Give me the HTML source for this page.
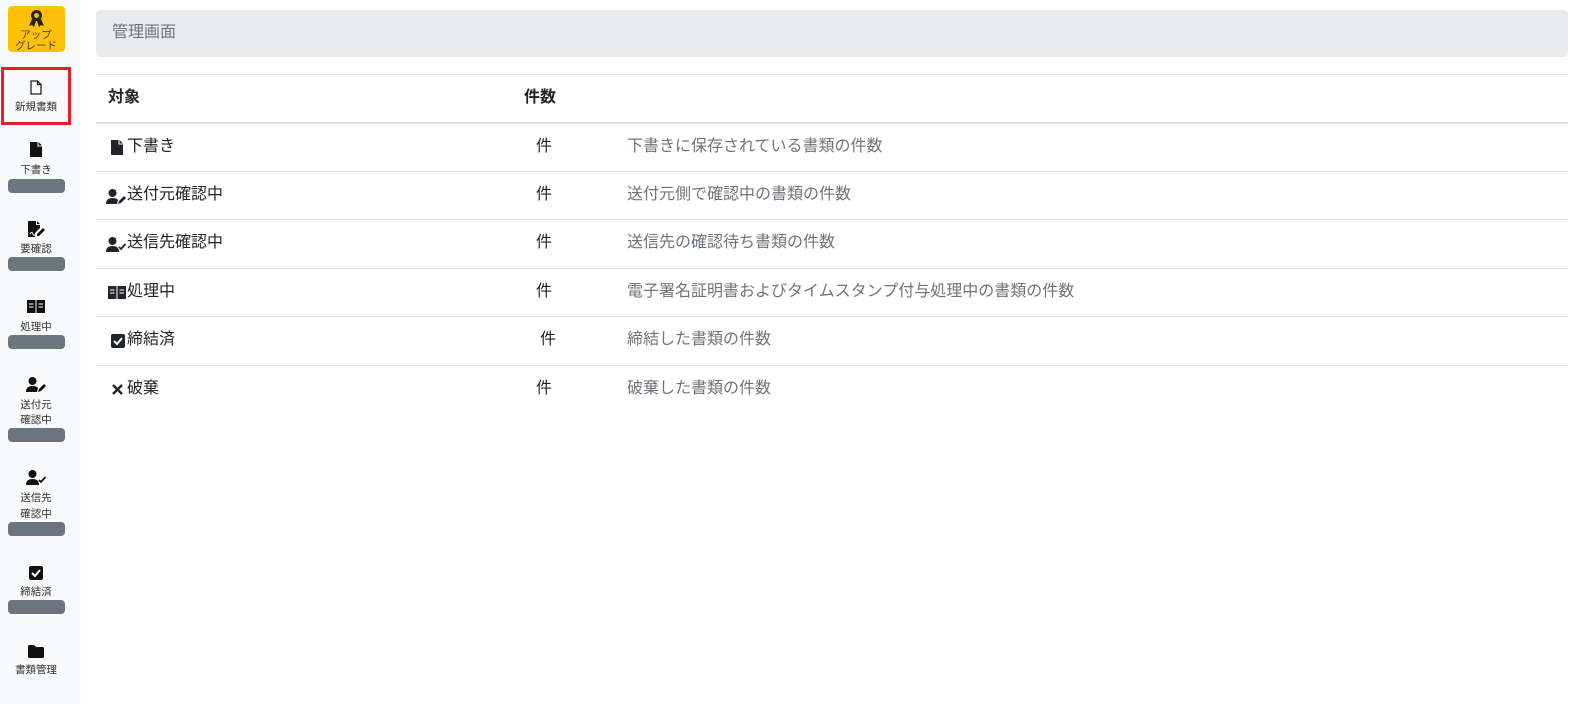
<!DOCTYPE html>
<html><head><meta charset="utf-8"><style>
*{margin:0;padding:0;box-sizing:border-box}
body{width:1587px;height:704px;background:#fff;font-family:"Liberation Sans","Noto Sans CJK JP",sans-serif;color:#212529;position:relative;overflow:hidden}
.side{position:absolute;left:0;top:0;width:81px;height:704px;background:#f8f9fa}
.a{position:absolute}
.lbl{position:absolute;left:0;width:72px;text-align:center;font-size:10.5px;color:#333;line-height:12px}
.badge{position:absolute;left:8px;width:57px;height:14px;background:#6c757d;border-radius:4px}
.ic{position:absolute;left:28px}
.line{position:absolute;left:96px;width:1472px;height:1px;background:#dee2e6}
.t{position:absolute;font-size:16px;line-height:20px;color:#212529}
.d{position:absolute;left:627px;font-size:16px;line-height:20px;color:#6c757d}
.n{position:absolute;font-size:16px;line-height:20px}
</style></head><body>
<div class="side">
 <div class="a" style="left:8px;top:6px;width:57px;height:46px;background:#ffc107;border-radius:4px"></div>
 <svg class="a" style="left:28px;top:9px" width="17" height="19" viewBox="0 0 17 19"><circle cx="8.5" cy="6.5" r="5.5" fill="#222"/><circle cx="8.5" cy="6.5" r="2.5" fill="#ffc107"/><path d="M4 10 L1 17 L4 16 L6 18 L8 12 Z M13 10 L16 17 L13 16 L11 18 L9 12Z" fill="#222"/></svg>
 <div class="lbl" style="top:29px;color:#444">アップ</div>
 <div class="lbl" style="top:40px;color:#444">グレード</div>
 <div class="a" style="left:1px;top:67px;width:70px;height:58px;border:3px solid #e3202a"></div>
 <svg class="ic" style="left:30px;top:80px" width="12" height="15" viewBox="0 0 12 15"><path d="M1 1H7.5L11 4.5V14H1Z M7.5 1V4.5H11" fill="none" stroke="#222" stroke-width="1.3"/></svg>
 <div class="lbl" style="top:101px">新規書類</div>
 <svg class="ic" style="left:30px;top:142px" width="12" height="15" viewBox="0 0 12 15"><path d="M0 0H7.5V4.5H12V15H0Z M8.5 0L12 3.5H8.5Z" fill="#111"/></svg>
 <div class="lbl" style="top:164px">下書き</div><div class="badge" style="top:179px"></div>
 <svg class="ic" style="left:28px;top:221px" width="17" height="16" viewBox="0 0 17 16"><path d="M0 0H8V4H12V7L7 12V16H0Z M9 0L12 3H9Z" fill="#111"/><path d="M9 13L15 7L17 9L11 15H9Z" fill="#111"/><path d="M2 13q2-3 3 0t3-1" stroke="#fff" fill="none" stroke-width="1"/></svg>
 <div class="lbl" style="top:243px">要確認</div><div class="badge" style="top:257px"></div>
 <svg class="ic" style="left:27px;top:300px" width="18" height="13" viewBox="0 0 18 13"><path d="M0 0H8.5V13H0Z M9.5 0H18V13H9.5Z" fill="#111"/><path d="M2 4H6.5M2 7H6.5M11.5 4H16M11.5 7H16" stroke="#fff" stroke-width="1"/></svg>
 <div class="lbl" style="top:321px">処理中</div><div class="badge" style="top:335px"></div>
 <svg class="ic" style="left:26px;top:377px" width="20" height="15" viewBox="0 0 20 15"><circle cx="6.5" cy="4" r="4" fill="#111"/><path d="M0 15Q0 9 6.5 9Q11 9 12 11L11 15Z" fill="#111"/><path d="M12 15L13 12L18 7L20 9L15 14Z" fill="#111"/></svg>
 <div class="lbl" style="top:399px">送付元</div><div class="lbl" style="top:414px">確認中</div><div class="badge" style="top:428px"></div>
 <svg class="ic" style="left:26px;top:470px" width="20" height="15" viewBox="0 0 20 15"><circle cx="6.5" cy="4" r="4" fill="#111"/><path d="M0 15Q0 9 6.5 9Q13 9 13 15Z" fill="#111"/><path d="M13 10L15 12L19.5 7" stroke="#111" stroke-width="1.8" fill="none"/></svg>
 <div class="lbl" style="top:492px">送信先</div><div class="lbl" style="top:508px">確認中</div><div class="badge" style="top:522px"></div>
 <svg class="ic" style="left:29px;top:566px" width="14" height="14" viewBox="0 0 14 14"><rect width="14" height="14" rx="2" fill="#111"/><path d="M3 7L6 10L11 4" stroke="#fff" stroke-width="2" fill="none"/></svg>
 <div class="lbl" style="top:586px">締結済</div><div class="badge" style="top:600px"></div>
 <svg class="ic" style="left:28px;top:645px" width="16" height="13" viewBox="0 0 16 13"><path d="M0 1.5Q0 0 1.5 0H6L8 2H14.5Q16 2 16 3.5V11.5Q16 13 14.5 13H1.5Q0 13 0 11.5Z" fill="#111"/></svg>
 <div class="lbl" style="top:664px">書類管理</div>
</div>
<div class="a" style="left:96px;top:10px;width:1472px;height:47px;background:#e9ecef;border-radius:4px"></div>
<div class="a" style="left:112px;top:23px;font-size:16px;line-height:20px;color:#6c757d">管理画面</div>
<div class="line" style="top:74px"></div>
<div class="t" style="left:108px;top:88px;font-weight:bold">対象</div>
<div class="t" style="left:524px;top:88px;font-weight:bold">件数</div>
<div class="line" style="top:122px;height:2px"></div>
<svg class="a" style="left:111px;top:140px" width="12" height="15" viewBox="0 0 12 15"><path d="M0 0H7.5V4.5H12V15H0Z M8.5 0L12 3.5H8.5Z" fill="#212529"/></svg>
<div class="t" style="left:127px;top:137px">下書き</div><div class="n" style="left:536px;top:137px">件</div><div class="d" style="top:137px">下書きに保存されている書類の件数</div>
<div class="line" style="top:171px"></div>
<svg class="a" style="left:106px;top:189px" width="20" height="15" viewBox="0 0 20 15"><circle cx="6.5" cy="4" r="4" fill="#212529"/><path d="M0 15Q0 9 6.5 9Q11 9 12 11L11 15Z" fill="#212529"/><path d="M12 15L13 12L18 7L20 9L15 14Z" fill="#212529"/></svg>
<div class="t" style="left:127px;top:185px">送付元確認中</div><div class="n" style="left:536px;top:185px">件</div><div class="d" style="top:185px">送付元側で確認中の書類の件数</div>
<div class="line" style="top:219px"></div>
<svg class="a" style="left:106px;top:237px" width="20" height="15" viewBox="0 0 20 15"><circle cx="6.5" cy="4" r="4" fill="#212529"/><path d="M0 15Q0 9 6.5 9Q13 9 13 15Z" fill="#212529"/><path d="M13 10L15 12L19.5 7" stroke="#212529" stroke-width="1.8" fill="none"/></svg>
<div class="t" style="left:127px;top:233px">送信先確認中</div><div class="n" style="left:536px;top:233px">件</div><div class="d" style="top:233px">送信先の確認待ち書類の件数</div>
<div class="line" style="top:268px"></div>
<svg class="a" style="left:108px;top:286px" width="18" height="13" viewBox="0 0 18 13"><path d="M0 0H8.5V13H0Z M9.5 0H18V13H9.5Z" fill="#212529"/><path d="M2 4H6.5M2 7H6.5M11.5 4H16M11.5 7H16" stroke="#fff" stroke-width="1"/></svg>
<div class="t" style="left:127px;top:282px">処理中</div><div class="n" style="left:536px;top:282px">件</div><div class="d" style="top:282px">電子署名証明書およびタイムスタンプ付与処理中の書類の件数</div>
<div class="line" style="top:316px"></div>
<svg class="a" style="left:111px;top:334px" width="14" height="14" viewBox="0 0 14 14"><rect width="14" height="14" rx="2" fill="#212529"/><path d="M3 7L6 10L11 4" stroke="#fff" stroke-width="2" fill="none"/></svg>
<div class="t" style="left:127px;top:330px">締結済</div><div class="n" style="left:540px;top:330px">件</div><div class="d" style="top:330px">締結した書類の件数</div>
<div class="line" style="top:365px"></div>
<svg class="a" style="left:112px;top:384px" width="11" height="11" viewBox="0 0 11 11"><path d="M1 1L10 10M10 1L1 10" stroke="#212529" stroke-width="2.4"/></svg>
<div class="t" style="left:127px;top:379px">破棄</div><div class="n" style="left:536px;top:379px">件</div><div class="d" style="top:379px">破棄した書類の件数</div>
</body></html>
